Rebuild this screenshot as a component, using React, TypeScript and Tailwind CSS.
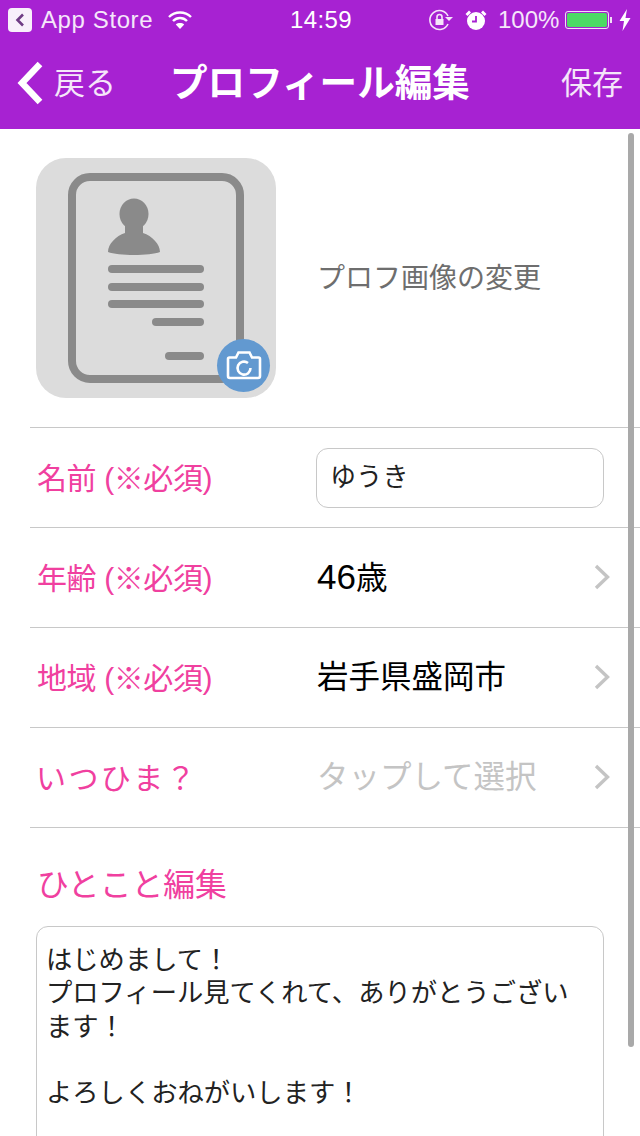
import React from "react";

const JP = '"Liberation Sans","Noto Sans CJK JP",sans-serif';

function Chevron() {
  return (
    <svg width="20" height="30" viewBox="0 0 20 30" className="absolute right-[28px] top-[34px]" fill="none">
      <path d="M4 4 L15.5 15 L4 26" stroke="#c4c4c4" strokeWidth="3.4" />
    </svg>
  );
}

function Row({ label, children, chevron, wide }: { label: React.ReactNode; children: React.ReactNode; chevron?: boolean; wide?: boolean }) {
  return (
    <div className="relative flex items-center h-[100px] ml-[30px] border-b border-[#c8c8c8]">
      <div className={wide ? "w-[287px] pl-[6px] pt-[2px] text-[30px] tracking-[2.4px] text-[#f0409f] shrink-0" : "w-[287px] pl-[7px] pt-[2px] text-[30px] tracking-[-0.4px] text-[#f0409f] shrink-0"}>{label}</div>
      {children}
      {chevron && <Chevron />}
    </div>
  );
}

function Req({ name }: { name: string }) {
  return (
    <>
      {name} (<span className="font-bold">※</span>必須)
    </>
  );
}

export default function App() {
  return (
    <div className="relative w-[640px] h-[1136px] overflow-hidden bg-white" style={{ fontFamily: JP }}>
      <div className="bg-[#a722d2] h-[129px] text-white">
        <div className="flex items-center h-[40px] relative">
          <div className="ml-[8px] w-[24px] h-[24px] rounded-[4px] bg-[#f8f0fb] flex items-center justify-center">
            <svg width="12" height="16" viewBox="0 0 12 16" fill="none">
              <path d="M9 2.5 L3.5 8 L9 13.5" stroke="#6f3c85" strokeWidth="2.6" />
            </svg>
          </div>
          <span className="ml-[9px] text-[24px] text-[#f5e6fa] tracking-[0.6px]">App Store</span>
          <svg width="26" height="20" viewBox="0 0 26 20" className="ml-[14px]" fill="none" stroke="#fff" strokeWidth="2.4">
            <path d="M2 7 C8 1 18 1 24 7" />
            <path d="M6 11 C10 7 16 7 20 11" />
            <path d="M13 19 L8.8 14.5 C11 12.6 15 12.6 17.2 14.5 Z" fill="#fff" stroke="none" />
          </svg>
          <span className="absolute left-[290px] text-[24px] font-medium tracking-[0.4px]">14:59</span>
          <div className="absolute left-[428px] top-[8px] w-[24px] h-[24px]">
            <svg width="26" height="24" viewBox="0 0 26 24" fill="none" stroke="#f5e6fa" strokeWidth="1.6">
              <path d="M20 8 A9.5 9.5 0 1 0 20 16" />
              <path d="M17 9 L25 9 L21 13 Z" fill="#f5e6fa" stroke="none" />
              <rect x="7.5" y="11" width="8" height="6" fill="#f5e6fa" stroke="none" />
              <path d="M9 11 V9 A2.5 2.5 0 0 1 14 9 V11" />
            </svg>
          </div>
          <div className="absolute left-[464px] top-[9px]">
            <svg width="24" height="22" viewBox="0 0 24 22" fill="#fff">
              <circle cx="12" cy="12" r="9" />
              <path d="M12 7 V12.5 H8" stroke="#a722d2" strokeWidth="1.8" fill="none" />
              <path d="M1.5 5 L5 1.5 L7 3.5 L3.5 7 Z M22.5 5 L19 1.5 L17 3.5 L20.5 7 Z" />
            </svg>
          </div>
          <span className="absolute left-[498px] text-[24px] text-[#f5e6fa]">100%</span>
          <div className="absolute left-[565px] top-[11px] w-[44px] h-[18px] rounded-[3px] border border-[#f0e0f6] p-[1px]">
            <div className="w-full h-full bg-[#4cd964] rounded-[2px]" />
          </div>
          <div className="absolute left-[610px] top-[17px] w-[2px] h-[6px] bg-[#f0e0f6]" />
          <svg width="12" height="22" viewBox="0 0 12 22" className="absolute left-[619px] top-[9px]" fill="#fff">
            <path d="M8 0 L0.5 12 H5 L3.5 22 L11.5 9 H6.5 Z" />
          </svg>
        </div>
        <div className="relative flex items-center justify-between h-[88px]">
          <div className="flex items-center pl-[17px]">
            <svg width="28" height="44" viewBox="0 0 28 44" fill="none" stroke="#fff" strokeWidth="6.5" className="-mt-[2px]">
              <path d="M23 3 L5 22 L23 41" />
            </svg>
            <span className="ml-[9px] text-[31px] text-[#f5e6fa]">戻る</span>
          </div>
          <div className="absolute left-[170px] text-[37.6px] font-bold whitespace-nowrap -mt-[1px]">プロフィール編集</div>
          <span className="mr-[17px] text-[31px] text-[#f5e6fa]">保存</span>
        </div>
      </div>

      <div className="flex items-center h-[299px] ml-[30px] border-b border-[#c8c8c8]">
        <div className="relative ml-[6px] -mt-[1px] w-[240px] h-[240px] rounded-[30px] bg-[#dcdcdc] shrink-0">
          <svg width="240" height="240" viewBox="0 0 240 240" fill="#8a8a8a">
            <rect x="36" y="19" width="168" height="202" rx="18" fill="none" stroke="#8a8a8a" strokeWidth="8" />
            <ellipse cx="98" cy="56" rx="14.5" ry="15.5" />
            <path d="M89 68 H107 V75 C116 78 124 86 124 94 C114 98 82 98 72 94 C72 86 80 78 89 75 Z" />
            <rect x="72" y="107" width="96" height="8" rx="4" />
            <rect x="72" y="125" width="96" height="8" rx="4" />
            <rect x="72" y="142" width="96" height="8" rx="4" />
            <rect x="116" y="160" width="52" height="8" rx="4" />
            <rect x="129" y="194" width="39" height="8" rx="4" />
          </svg>
          <div className="absolute left-[181px] top-[181px] w-[53px] h-[53px] rounded-full bg-[#6299d0] flex items-center justify-center">
            <svg width="36" height="30" viewBox="0 0 36 30" fill="none" stroke="#fff" strokeWidth="2.6">
              <path d="M3.5 7.5 H10 L12.5 2.5 H23.5 L26 7.5 H32.5 A1.5 1.5 0 0 1 34 9 V26 A2 2 0 0 1 32 28 H4 A2 2 0 0 1 2 26 V9 A1.5 1.5 0 0 1 3.5 7.5 Z" />
              <path d="M22 13 A6.5 6.5 0 1 0 24.5 18" />
            </svg>
          </div>
        </div>
        <span className="ml-[41px] mt-[2px] text-[28px] text-[#6e6e6e]">プロフ画像の変更</span>
      </div>

      <Row label={<Req name="名前" />}>
        <div className="w-[288px] h-[60px] -ml-[1px] rounded-[12px] border border-[#c8c8c8] flex items-center pl-[13px] text-[26px] text-[#222] tracking-[0.3px]">ゆうき</div>
      </Row>
      <Row label={<Req name="年齢" />} chevron>
        <span className="text-[31.5px] text-black"><span className="text-[35px]">46</span>歳</span>
      </Row>
      <Row label={<Req name="地域" />} chevron>
        <span className="text-[31.5px] text-black pt-[1px]">岩手県盛岡市</span>
      </Row>
      <Row label="いつひま？" chevron wide>
        <span className="text-[31.5px] text-[#c4c4c4] pt-[1px]">タップして選択</span>
      </Row>

      <div className="pl-[37px] pt-[33px] text-[31.8px] leading-[48px] text-[#f0409f]">ひとこと編集</div>
      <div className="mx-[36px] mt-[17px] h-[300px] rounded-[12px] border border-[#c8c8c8] pl-[9px] pt-[17px] text-[26.3px] leading-[33.3px] text-[#222]">
        はじめまして！
        <br />
        プロフィール見てくれて、ありがとうござい
        <br />
        ます！
        <br />
        <br />
        よろしくおねがいします！
      </div>

      <div className="absolute left-[628px] top-[133px] w-[6px] h-[914px] rounded-full bg-[#a9a9a9]" />
    </div>
  );
}
